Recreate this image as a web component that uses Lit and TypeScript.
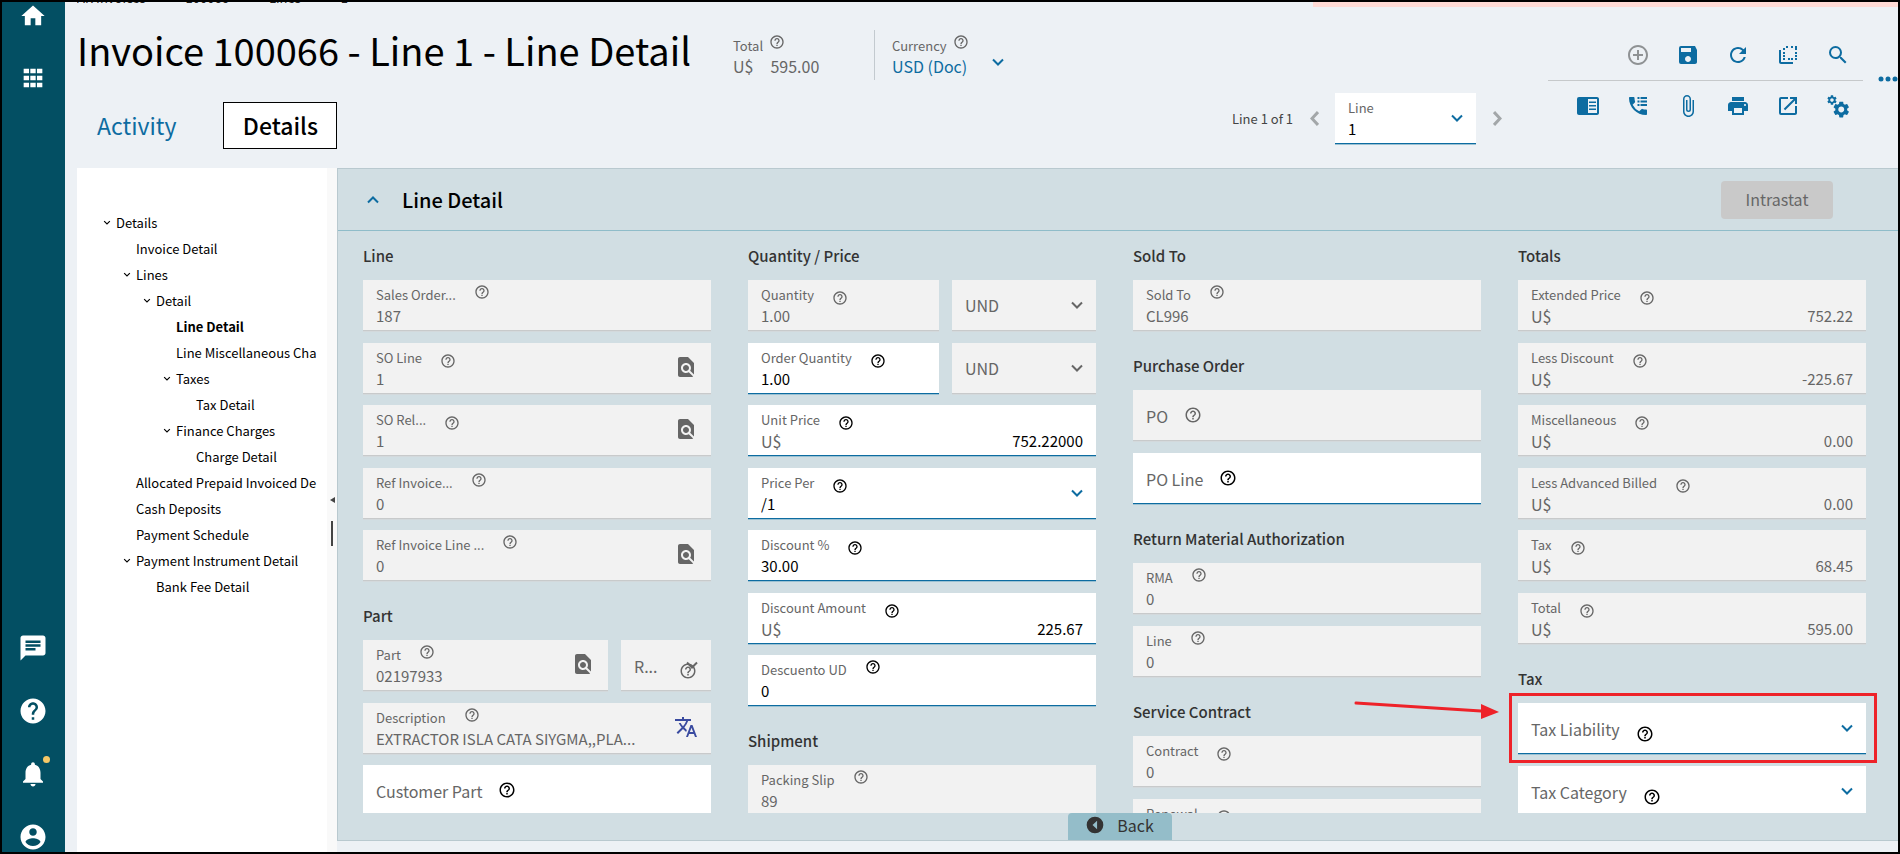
import { LitElement, html, svg, css, nothing, type TemplateResult } from "lit";
import { customElement, property } from "lit/decorators.js";
import { classMap } from "lit/directives/class-map.js";

type Kind = "text" | "select" | "money";

interface FieldSpec {
  label?: string;
  name?: string;
  value?: string;
  kind?: Kind;
  editable?: boolean;
  empty?: boolean;
  help?: "high" | "low" | "over" | "none";
  action?: "find" | "translate";
  marked?: boolean;
}

interface Row {
  layout?: "qty" | "part";
  fields: FieldSpec[];
}

interface Section {
  title: string;
  rows: Row[];
}

interface TreeItem {
  text: string;
  level: number;
  open?: boolean;
  current?: boolean;
}

const icon = (name: string, cls = "", box = "0 0 24 24") => html`
  <svg class="icon ${cls}" viewBox=${box} aria-hidden="true">${ICONS[name]}</svg>
`;

const GEAR =
  "M19.140 12.940c.04-.3.06-.61.06-.94 0-.32-.02-.64-.07-.94l2.030-1.580c.18-.14.23-.41.12-.61l-1.920-3.320c-.12-.22-.37-.29-.59-.22l-2.390.96c-.5-.38-1.030-.7-1.620-.94l-.36-2.540c-.04-.24-.24-.41-.48-.41h-3.840c-.24 0-.43.17-.47.41l-.36 2.540c-.59.24-1.130.57-1.620.94l-2.390-.96c-.22-.08-.47 0-.59.22L2.740 8.870c-.12.21-.08.47.12.61l2.030 1.580c-.05.3-.09.63-.09.94s.02.64.07.94l-2.030 1.580c-.18.14-.23.41-.12.61l1.920 3.320c.12.22.37.29.59.22l2.390-.96c.5.38 1.030.7 1.620.94l.36 2.540c.05.24.24.41.48.41h3.840c.24 0 .44-.17.47-.41l.36-2.540c.59-.24 1.130-.56 1.620-.94l2.390.96c.22.08.47 0 .59-.22l1.920-3.320c.12-.22.07-.47-.12-.61zM12 15.600c-1.980 0-3.600-1.620-3.600-3.600s1.620-3.600 3.600-3.600 3.600 1.620 3.600 3.600-1.620 3.600-3.600 3.600z";

const ICONS: Record<string, TemplateResult> = {
  home: svg`<path d="M10 20v-6h4v6h5v-8h3L12 3 2 12h3v8z"/>`,
  apps: svg`<path d="M4 8h4.6V4H4zm5.7 6h4.6v-4H9.700zM4 20h4.600v-4H4zm0-6h4.600v-4H4zm5.700 6h4.600v-4H9.700zM15.400 4v4H20V4zM9.700 8h4.600V4H9.700zM15.400 14H20v-4h-4.600zM15.400 20H20v-4h-4.600z"/>`,
  chat: svg`<path d="M20 2H4c-1.100 0-2 .9-2 2v18l4-4h14c1.100 0 2-.9 2-2V4c0-1.100-.9-2-2-2zM6 9h12v2H6zm8 5H6v-2h8zm4-6H6V6h12z"/>`,
  helpFull: svg`<path d="M12 2C6.480 2 2 6.480 2 12s4.480 10 10 10 10-4.480 10-10S17.520 2 12 2zm1 17h-2v-2h2zm2.070-7.750l-.9.920C13.450 12.900 13 13.500 13 15h-2v-.5c0-1.100.45-2.100 1.170-2.830l1.240-1.260c.37-.36.59-.86.59-1.410 0-1.100-.9-2-2-2s-2 .9-2 2H8c0-2.210 1.790-4 4-4s4 1.790 4 4c0 .88-.36 1.680-.93 2.250z"/>`,
  bell: svg`<path d="M12 22c1.100 0 2-.9 2-2h-4c0 1.100.89 2 2 2zm6-6v-5c0-3.070-1.640-5.640-4.500-6.320V4c0-.83-.67-1.500-1.500-1.500s-1.500.67-1.500 1.500v.68C7.630 5.360 6 7.920 6 11v5l-2 2v1h16v-1z"/>`,
  user: svg`<path d="M12 2C6.480 2 2 6.480 2 12s4.480 10 10 10 10-4.480 10-10S17.520 2 12 2zm0 3c1.660 0 3 1.340 3 3s-1.340 3-3 3-3-1.340-3-3 1.340-3 3-3zm0 14.200c-2.500 0-4.710-1.280-6-3.220.03-1.990 4-3.080 6-3.080 1.990 0 5.970 1.090 6 3.080-1.290 1.940-3.500 3.220-6 3.220z"/>`,
  help: svg`<path d="M11 18h2v-2h-2zm1-16C6.480 2 2 6.480 2 12s4.480 10 10 10 10-4.480 10-10S17.520 2 12 2zm0 18c-4.410 0-8-3.590-8-8s3.590-8 8-8 8 3.590 8 8-3.590 8-8 8zm0-14c-2.210 0-4 1.790-4 4h2c0-1.100.9-2 2-2s2 .9 2 2c0 2-3 1.750-3 5h2c0-2.250 3-2.500 3-5 0-2.210-1.790-4-4-4z"/>`,
  chevron: svg`<path class="line" d="M2 1.500 7 6.500 12 1.500"/>`,
  add: svg`<path d="M13 7h-2v4H7v2h4v4h2v-4h4v-2h-4zm-1-5C6.480 2 2 6.480 2 12s4.480 10 10 10 10-4.480 10-10S17.520 2 12 2zm0 18c-4.410 0-8-3.590-8-8s3.590-8 8-8 8 3.590 8 8-3.590 8-8 8z"/>`,
  save: svg`<path d="M19 3H5a2 2 0 0 0-2 2v14a2 2 0 0 0 2 2h14c1.100 0 2-.9 2-2V7l-2-4zm-7 16c-1.660 0-3-1.340-3-3s1.340-3 3-3 3 1.340 3 3-1.340 3-3 3zm3-10H5V5h10z"/>`,
  refresh: svg`<path d="M17.650 6.350A7.958 7.958 0 0 0 12 4c-4.420 0-7.990 3.580-7.990 8s3.570 8 7.990 8c3.730 0 6.840-2.550 7.730-6h-2.080A5.990 5.990 0 0 1 12 18c-3.310 0-6-2.690-6-6s2.690-6 6-6c1.660 0 3.140.69 4.220 1.780L13 11h7V4z"/>`,
  copy: svg`<path d="M7 7h2V5H7zm0 4h2V9H7zm0-8v0h2V3zm5 14h2v-2h-2zm7-14h0v2h2V3zm-7 0h-2v2h2zm7 14h2v-2h-2zM7 17h2v-2H7zm12-6h2V9h-2zm0-4h2V5h-2zm0 7h2v-2h-2zM7 14h2v-2H7zm8-9h2V3h-2zm0 12h2v-2h-2zM5 7H3v12c0 1.100.9 2 2 2h12v-2H5z"/>`,
  search: svg`<path d="M15.500 14h-.79l-.28-.27A6.471 6.471 0 0 0 16 9.500 6.500 6.500 0 1 0 9.500 16c1.610 0 3.090-.59 4.230-1.570l.27.28v.79l5 4.990L20.490 19zm-6 0C7.010 14 5 11.990 5 9.500S7.010 5 9.500 5 14 7.010 14 9.500 11.990 14 9.500 14z"/>`,
  reader: svg`<path d="M21 3H3a2 2 0 0 0-2 2v14c0 1.100.9 2 2 2h18c1.100 0 2-.9 2-2V5c0-1.100-.9-2-2-2zm0 16h-9V5h9zM13 7.500h7V9h-7zm0 3.500h7v1.500h-7zm0 3.500h7V16h-7z"/>`,
  phone: svg`<path d="M20 15.500c-1.250 0-2.450-.2-3.570-.57a1.020 1.020 0 0 0-1.020.24l-2.200 2.200a15.045 15.045 0 0 1-6.590-6.580l2.200-2.210c.28-.27.36-.66.250-1.010A11.360 11.360 0 0 1 8.500 4c0-.55-.45-1-1-1H4c-.55 0-1 .45-1 1 0 9.390 7.610 17 17 17 .55 0 1-.45 1-1v-3.500c0-.55-.45-1-1-1zM11.500 3h2v2h-2zm3 0H21v2h-6.500zm-3 3.500h2v2h-2zm3 0H21v2h-6.500zm-3 3.500h2v2h-2zm3 0H21v2h-6.500z"/>`,
  clip: svg`<path d="M16.500 6v11.500c0 2.210-1.790 4-4 4s-4-1.790-4-4V5a2.500 2.500 0 0 1 5 0v10.500c0 .55-.45 1-1 1s-1-.45-1-1V6H10v9.500a2.500 2.500 0 0 0 5 0V5c0-2.210-1.790-4-4-4S7 2.790 7 5v12.500c0 3.040 2.460 5.500 5.500 5.500s5.500-2.460 5.500-5.500V6z"/>`,
  print: svg`<path d="M19 8H5c-1.660 0-3 1.340-3 3v6h4v4h12v-4h4v-6c0-1.660-1.340-3-3-3zm-3 11H8v-5h8zm3-7c-.55 0-1-.45-1-1s.45-1 1-1 1 .45 1 1-.45 1-1 1zM18 3H6v4h12z"/>`,
  open: svg`<path d="M19 19H5V5h7V3H5a2 2 0 0 0-2 2v14a2 2 0 0 0 2 2h14c1.100 0 2-.9 2-2v-7h-2zM14 3v2h3.590l-9.830 9.830 1.410 1.410L19 6.410V10h2V3z"/>`,
  gears: svg`<path transform="translate(5.400 5.700) scale(.82)" d=${GEAR}/><path transform="translate(.1 .1) scale(.49)" d=${GEAR}/>`,
  dots: svg`<circle cx="4" cy="12" r="2.500"/><circle cx="11" cy="12" r="2.500"/><circle cx="18" cy="12" r="2.500"/>`,
  find: svg`<path d="M20 19.590V8l-6-6H6c-1.100 0-1.990.9-1.990 2L4 20c0 1.100.89 2 1.990 2H18c.45 0 .85-.15 1.190-.4l-4.430-4.430c-.8.520-1.740.83-2.760.83-2.760 0-5-2.240-5-5s2.240-5 5-5 5 2.240 5 5c0 1.020-.31 1.960-.83 2.750zM9 13c0 1.660 1.340 3 3 3s3-1.340 3-3-1.340-3-3-3-3 1.340-3 3z"/>`,
  translate: svg`<path d="M12.870 15.070l-2.540-2.510.03-.03A17.520 17.520 0 0 0 14.070 6H17V4h-7V2H8v2H1v1.990h11.170C11.500 7.920 10.440 9.750 9 11.350 8.070 10.320 7.300 9.190 6.690 8h-2c.73 1.630 1.730 3.170 2.980 4.560l-5.090 5.020L4 19l5-5 3.110 3.110zM18.500 10h-2L12 22h2l1.120-3h4.750L21 22h2zm-2.620 7l1.620-4.330L19.120 17z"/>`,
  back: svg`<path fill-rule="evenodd" d="M12 2a10 10 0 1 0 0 20 10 10 0 0 0 0-20zM14.500 7v10L9 12z"/>`,
};

const sharedStyles = css`
  *,
  *::before,
  *::after {
    box-sizing: border-box;
  }
  button,
  input,
  select {
    font: inherit;
    color: inherit;
    margin: 0;
    padding: 0;
    border: 0;
    border-radius: 0;
    background: none;
    appearance: none;
    outline: none;
    min-width: 0;
    opacity: 1;
  }
  button {
    display: flex;
    align-items: center;
    justify-content: center;
    flex: none;
  }
  .icon {
    display: block;
    flex: none;
    width: 24px;
    height: 24px;
    fill: currentColor;
  }
  .icon.help {
    width: 16px;
    height: 16px;
  }
  .icon.help.big {
    width: 18px;
    height: 18px;
  }
  .icon.chev {
    width: 14px;
    height: 8px;
  }
  .line {
    fill: none;
    stroke: currentColor;
    stroke-width: 2;
  }
`;

@customElement("form-field")
export class FormField extends LitElement {
  @property({ attribute: false }) spec: FieldSpec = {};

  static styles = [
    sharedStyles,
    css`
      :host {
        display: block;
        min-width: 0;
        position: relative;
      }
      .field {
        display: flex;
        align-items: center;
        height: 51px;
        padding: 0 13px;
        background: #f2f2f2;
        color: #666;
        border-bottom: 1px solid #c8cacb;
        box-shadow: 0 1px #d3d9dc;
        font-size: 15px;
        line-height: 20px;
      }
      .field.editable {
        background: #fff;
        border-bottom-color: #0d6ca1;
        box-shadow: 0 1px #9bc1d2;
      }
      .body {
        flex: 1;
        min-width: 0;
      }
      .top {
        display: flex;
        gap: 18px;
        height: 22px;
        align-items: center;
      }
      .label {
        font-size: 13px;
        line-height: 22px;
        white-space: nowrap;
        color: #666;
      }
      .high {
        align-self: flex-start;
      }
      .low {
        align-self: flex-end;
      }
      .editable .help {
        color: #000;
      }
      .value {
        display: flex;
        height: 20px;
      }
      .unit {
        font-size: 16px;
        color: #666;
      }
      .input {
        flex: 1;
        width: 100%;
        height: 20px;
        line-height: 20px;
      }
      .editable .input {
        color: #000;
      }
      .input.right {
        text-align: right;
      }
      .large,
      .large .label {
        font-size: 16px;
      }
      .large .label {
        padding-top: 2px;
      }
      .large .help {
        margin-left: 16px;
      }
      .large .low {
        align-self: center;
        box-sizing: content-box;
        padding-top: 12px;
      }
      .large .input {
        height: 24px;
        line-height: 24px;
      }
      .chev {
        pointer-events: none;
        margin-right: -1px;
      }
      .editable .chev {
        color: #0d6ca1;
      }
      .translate {
        color: #3a4ba0;
      }
      .find,
      .translate {
        padding-bottom: 2px;
      }
      .stack {
        position: relative;
        margin-left: auto;
      }
      .stack .help {
        position: absolute;
        left: -6px;
        top: 1px;
        margin: 0;
      }
    `,
  ];

  render() {
    const f = this.spec;
    const kind = f.kind ?? "text";
    const name = f.label ?? f.name ?? "";
    const large = f.empty || !f.label;
    const control =
      kind === "select"
        ? html`<select id="control" class="input" aria-label=${f.label ? nothing : name} ?disabled=${!f.editable}>
            <option>${f.value ?? ""}</option>
          </select>`
        : html`<input
            id="control"
            class="input ${kind === "money" ? "right" : ""}"
            .value=${f.value ?? ""}
            ?readonly=${!f.editable}
          />`;
    const chevron = kind === "select" ? icon("chevron", "chev", "0 0 14 8") : nothing;
    const label = f.label ? html`<label class="label" for="control">${f.label}</label>` : nothing;
    const classes = { field: true, editable: !!f.editable, large: !!large };

    if (f.help === "over") {
      return html`<div class=${classMap(classes)}>
        ${label}${control}
        <span class="stack">${chevron}${icon("help", "help big")}</span>
      </div>`;
    }
    if (large) {
      return html`<div class=${classMap(classes)}>
        ${label}${f.label ? icon("help", `help big ${f.help ?? ""}`) : nothing}${control}${chevron}
      </div>`;
    }
    return html`<div class=${classMap(classes)}>
      <div class="body">
        <div class="top">${label}${f.help === "none" ? nothing : icon("help", `help ${f.help ?? "high"}`)}</div>
        <div class="value">${kind === "money" ? html`<span class="unit">U$</span>` : nothing}${control}</div>
      </div>
      ${chevron}
      ${f.action
        ? html`<button class=${f.action} aria-label=${f.action === "find" ? "Search" : "Translate"}>
            ${icon(f.action)}
          </button>`
        : nothing}
    </div>`;
  }
}

const ro = (label: string, value: string, help: "high" | "low" = "high", extra: Partial<FieldSpec> = {}): Row => ({
  fields: [{ label, value, help, ...extra }],
});
const ed = (label: string, value: string, help: "high" | "low" = "low", extra: Partial<FieldSpec> = {}): Row => ({
  fields: [{ label, value, help, editable: true, ...extra }],
});
const money = (label: string, value: string, editable = false): Row => ({
  fields: [{ label, value, help: "low", kind: "money", editable }],
});

const LINE_PICKER: FieldSpec = { label: "Line", value: "1", kind: "select", editable: true, help: "none" };

const COLUMNS: Section[][] = [
  [
    {
      title: "Line",
      rows: [
        ro("Sales Order...", "187"),
        ro("SO Line", "1", "low", { action: "find" }),
        ro("SO Rel...", "1", "low", { action: "find" }),
        ro("Ref Invoice...", "0"),
        ro("Ref Invoice Line ...", "0", "high", { action: "find" }),
      ],
    },
    {
      title: "Part",
      rows: [
        {
          layout: "part",
          fields: [
            { label: "Part", value: "02197933", help: "high", action: "find" },
            { label: "R...", kind: "select", empty: true, help: "over" },
          ],
        },
        ro("Description", "EXTRACTOR ISLA CATA SIYGMA,,PLA...", "high", { action: "translate" }),
        { fields: [{ label: "Customer Part", empty: true, editable: true }] },
      ],
    },
  ],
  [
    {
      title: "Quantity / Price",
      rows: [
        {
          layout: "qty",
          fields: [
            { label: "Quantity", value: "1.00", help: "low" },
            { name: "Quantity unit", value: "UND", kind: "select" },
          ],
        },
        {
          layout: "qty",
          fields: [
            { label: "Order Quantity", value: "1.00", help: "low", editable: true },
            { name: "Order quantity unit", value: "UND", kind: "select" },
          ],
        },
        money("Unit Price", "752.22000", true),
        ed("Price Per", "/1", "low", { kind: "select" }),
        ed("Discount %", "30.00"),
        money("Discount Amount", "225.67", true),
        ed("Descuento UD", "0", "high"),
      ],
    },
    { title: "Shipment", rows: [ro("Packing Slip", "89")] },
  ],
  [
    { title: "Sold To", rows: [ro("Sold To", "CL996")] },
    {
      title: "Purchase Order",
      rows: [
        { fields: [{ label: "PO", empty: true }] },
        { fields: [{ label: "PO Line", empty: true, editable: true }] },
      ],
    },
    { title: "Return Material Authorization", rows: [ro("RMA", "0"), ro("Line", "0")] },
    { title: "Service Contract", rows: [ro("Contract", "0", "low"), ro("Renewal", "0", "low")] },
  ],
  [
    {
      title: "Totals",
      rows: [
        money("Extended Price", "752.22"),
        money("Less Discount", "-225.67"),
        money("Miscellaneous", "0.00"),
        money("Less Advanced Billed", "0.00"),
        money("Tax", "68.45"),
        money("Total", "595.00"),
      ],
    },
    {
      title: "Tax",
      rows: [
        { fields: [{ label: "Tax Liability", empty: true, editable: true, kind: "select", help: "low", marked: true }] },
        { fields: [{ label: "Tax Category", empty: true, editable: true, kind: "select", help: "low" }] },
      ],
    },
  ],
];

const TREE: TreeItem[] = [
  { text: "Details", level: 0, open: true },
  { text: "Invoice Detail", level: 1 },
  { text: "Lines", level: 1, open: true },
  { text: "Detail", level: 2, open: true },
  { text: "Line Detail", level: 3, current: true },
  { text: "Line Miscellaneous Cha", level: 3 },
  { text: "Taxes", level: 3, open: true },
  { text: "Tax Detail", level: 4 },
  { text: "Finance Charges", level: 3, open: true },
  { text: "Charge Detail", level: 4 },
  { text: "Allocated Prepaid Invoiced De", level: 1 },
  { text: "Cash Deposits", level: 1 },
  { text: "Payment Schedule", level: 1 },
  { text: "Payment Instrument Detail", level: 1, open: true },
  { text: "Bank Fee Detail", level: 2 },
];

const TOOLS_TOP = [
  ["add", "New"],
  ["save", "Save"],
  ["refresh", "Refresh"],
  ["copy", "Copy"],
  ["search", "Search"],
];
const TOOLS_BOTTOM = [
  ["reader", "Reader view"],
  ["phone", "Call log"],
  ["clip", "Attachments"],
  ["print", "Print"],
  ["open", "Open in new window"],
  ["gears", "Settings"],
];

@customElement("app-root")
export class AppRoot extends LitElement {
  static styles = [
    sharedStyles,
    css`
      :host {
        display: block;
        font-family: "Noto Sans CJK JP", "Noto Sans", sans-serif;
        color: #000;
      }
      .frame {
        display: flex;
        height: 100vh;
        border: 2px solid #000;
        background: #edf1f5;
        overflow: hidden;
      }
      .rail {
        flex: none;
        width: 63px;
        padding-right: 1px;
        background: #034f63;
        color: #fff;
        display: flex;
        flex-direction: column;
        justify-content: space-between;
      }
      .rail-group {
        display: flex;
        flex-direction: column;
        align-items: center;
      }
      .rail-group.upper {
        gap: 34px;
      }
      .rail-group.lower {
        gap: 33px;
      }
      .rail .icon {
        width: 30px;
        height: 30px;
      }
      .rail .icon.grid,
      .rail .icon.house {
        width: 28px;
        height: 28px;
      }
      .alert {
        position: relative;
      }
      .alert::after {
        content: "";
        position: absolute;
        right: -2px;
        top: -3px;
        width: 7px;
        height: 7px;
        border-radius: 50%;
        background: #f6c867;
      }
      .main {
        flex: 1;
        min-width: 0;
        display: flex;
        flex-direction: column;
        padding-left: 12px;
      }
      .crumbs {
        flex: none;
        display: flex;
        align-items: flex-end;
        justify-content: space-between;
        height: 5px;
        overflow: hidden;
      }
      .trail {
        display: flex;
        gap: 40px;
        font-size: 13px;
        line-height: 18px;
      }
      .trail a {
        color: #222;
        text-decoration: none;
      }
      .notice {
        width: 585px;
        height: 5px;
        background: #ffdad5;
      }
      .head {
        flex: none;
        display: flex;
        justify-content: space-between;
        height: 161px;
      }
      .title-row {
        display: flex;
        align-items: flex-start;
        padding-top: 23px;
        white-space: nowrap;
      }
      .title {
        margin: 0;
        font-size: 38px;
        line-height: 40px;
        font-weight: 400;
      }
      .stat {
        margin-left: 42px;
        color: #666;
        font-size: 16px;
      }
      .stat-top {
        display: flex;
        gap: 6px;
        height: 24px;
        padding-top: 4px;
      }
      .stat-top .label {
        font-size: 13px;
        line-height: 24px;
      }
      .stat-value {
        display: flex;
        gap: 17px;
        line-height: 24px;
        height: 24px;
        width: 141px;
      }
      .currency {
        margin-left: 0;
        padding-left: 17px;
        border-left: 1px solid #c3cacf;
        height: 50px;
      }
      .currency .stat-value {
        color: #0d6ca1;
        gap: 0;
      }
      .currency .input {
        width: 99px;
        height: 24px;
        line-height: 24px;
      }
      .currency .chev {
        margin-top: 4px;
      }
      .tabs {
        display: flex;
        align-items: center;
        padding: 22px 0 0 20px;
        gap: 47px;
      }
      .tab {
        height: 47px;
        font-size: 23px;
        color: #0d6ca1;
        padding-bottom: 2px;
      }
      .tab.selected {
        width: 114px;
        background: #fff;
        border: 1px solid #000;
        color: #000;
        font-weight: 500;
      }
      .side {
        display: flex;
        position: relative;
      }
      .pager {
        display: flex;
        align-items: center;
        height: 51px;
        margin-top: 86px;
        font-size: 13px;
        color: #444;
      }
      .pager .arrow {
        width: 42px;
        height: 40px;
        color: #a3a7a9;
      }
      .arrow .icon {
        width: 9px;
        height: 15px;
      }
      .arrow .line {
        stroke-width: 3;
      }
      .picker {
        width: 141px;
      }
      .tools {
        width: 315px;
        margin: 0 35px 0 30px;
        color: #0d6ca1;
      }
      .tool-row {
        display: flex;
        justify-content: flex-end;
        gap: 26px;
        padding-right: 13px;
      }
      .tool-row.upper {
        padding-top: 36px;
        padding-bottom: 13px;
        border-bottom: 1px solid #c6c9cb;
      }
      .tool-row.lower {
        padding-top: 13px;
      }
      .tool-row button:disabled {
        color: #8f9294;
      }
      .more {
        position: absolute;
        right: -3px;
        top: 60px;
        color: #0d6ca1;
      }
      .content {
        flex: 1;
        min-height: 0;
        display: flex;
      }
      .tree {
        flex: none;
        width: 250px;
        padding: 41px 5px 0 20px;
        background: #fff;
      }
      .tree-list {
        list-style: none;
        margin: 0;
        padding: 0;
        overflow: hidden;
      }
      .node {
        display: flex;
        align-items: center;
        height: 26px;
        font-size: 13px;
        white-space: nowrap;
      }
      .node.l1 {
        padding-left: 20px;
      }
      .node.l2 {
        padding-left: 40px;
      }
      .node.l3 {
        padding-left: 60px;
      }
      .node.l4 {
        padding-left: 80px;
      }
      .node a {
        color: inherit;
        text-decoration: none;
      }
      .node.current {
        font-weight: 700;
      }
      .twist {
        display: flex;
        width: 19px;
        justify-content: center;
        flex: none;
      }
      .twist .icon {
        width: 8px;
        height: 5px;
      }
      .splitter {
        flex: none;
        width: 10px;
        background: #f9f9f9;
        display: flex;
        flex-direction: column;
        align-items: center;
        gap: 18px;
        padding: 329px 0 0 0;
      }
      .fold {
        border: 3px solid transparent;
        border-right: 5px solid #444;
        border-left-width: 0;
      }
      .grip {
        width: 2px;
        height: 25px;
        background: #444;
      }
      .panel {
        flex: 1;
        min-width: 0;
        margin-bottom: 11px;
        background: #d1dee3;
        border: 1px solid #b9c9cf;
        border-right: 0;
        display: flex;
        flex-direction: column;
      }
      .panel-head {
        flex: none;
        display: flex;
        align-items: center;
        height: 62px;
        padding: 0 65px 0 28px;
        border-bottom: 1px solid #8fbcc9;
      }
      .collapse .icon {
        color: #0d6ca1;
        transform: rotate(180deg);
      }
      .panel-title {
        flex: 1;
        margin: 0 0 0 22px;
        font-size: 20px;
        font-weight: 500;
        line-height: 30px;
      }
      .intrastat {
        width: 112px;
        height: 38px;
        padding-bottom: 2px;
        border-radius: 4px;
        background: #c9c9c9;
        color: #666;
        font-size: 16px;
      }
      .sheet {
        flex: 1;
        min-height: 0;
        overflow: hidden;
        display: grid;
        grid-template-columns: repeat(4, minmax(0, 1fr));
        gap: 37px;
        padding: 13px 32px 0 25px;
        align-items: start;
      }
      .section {
        margin-bottom: 23px;
      }
      .section-title {
        margin: 0 0 12px;
        font-size: 15px;
        line-height: 24px;
        font-weight: 500;
        color: #333;
      }
      .rows {
        display: flex;
        flex-direction: column;
      }
      .row {
        display: grid;
        grid-template-columns: minmax(0, 1fr);
        gap: 13px;
        margin-bottom: 12px;
        position: relative;
      }
      .row:nth-child(even) {
        margin-bottom: 11px;
      }
      .row:last-child {
        margin-bottom: 0;
      }
      .row.qty {
        grid-template-columns: minmax(0, 191fr) minmax(0, 144fr);
      }
      .row.part {
        grid-template-columns: minmax(0, 1fr) 90px;
      }
      .mark {
        position: absolute;
        inset: -10px -11px -9px -9px;
        border: 3px solid #ee2229;
        pointer-events: none;
      }
      .pointer {
        position: absolute;
        right: 100%;
        top: -4px;
        margin-right: 19px;
        width: 146px;
        height: 22px;
      }
      .foot {
        flex: none;
        display: flex;
        justify-content: center;
        height: 27px;
        padding-left: 3px;
      }
      .back {
        width: 104px;
        gap: 12px;
        padding-bottom: 4px;
        border-radius: 4px 4px 0 0;
        background: #94bdc9;
        color: #333;
        font-size: 16px;
      }
      .back .icon {
        width: 20px;
        height: 20px;
      }
    `,
  ];

  private renderSection(section: Section) {
    return html`<section class="section">
      <h3 class="section-title">${section.title}</h3>
      <div class="rows">
        ${section.rows.map(
          (row) => html`<div class="row ${row.layout ?? ""}">
            ${row.fields.map((spec) => html`<form-field .spec=${spec}></form-field>`)}
            ${row.fields.some((spec) => spec.marked)
              ? html`<div class="mark"></div>
                  <svg class="pointer" viewBox="0 0 146 22" aria-hidden="true">
                    <path d="M3 4 128 12" stroke="#ee2229" stroke-width="3" stroke-linecap="round" />
                    <path d="M128 5 146 13 128 20z" fill="#ee2229" />
                  </svg>`
              : nothing}
          </div>`,
        )}
      </div>
    </section>`;
  }

  private renderTool([name, label]: string[]) {
    return html`<button aria-label=${label} ?disabled=${name === "add"}>${icon(name)}</button>`;
  }

  render() {
    return html`<div class="frame">
      <nav class="rail" aria-label="Main">
        <div class="rail-group upper">
          <button aria-label="Home">${icon("home", "house")}</button>
          <button aria-label="Apps">${icon("apps", "grid")}</button>
        </div>
        <div class="rail-group lower">
          <button aria-label="Messages">${icon("chat")}</button>
          <button aria-label="Help">${icon("helpFull")}</button>
          <button class="alert" aria-label="Notifications">${icon("bell")}</button>
          <button aria-label="Account">${icon("user")}</button>
        </div>
      </nav>
      <main class="main">
        <div class="crumbs">
          <div class="trail"><a href="#">AR Invoices</a><a href="#">100066</a><a href="#">Lines</a><a href="#">1</a></div>
          <div class="notice"></div>
        </div>
        <header class="head">
          <div>
            <div class="title-row">
              <h1 class="title">Invoice 100066 - Line 1 - Line Detail</h1>
              <div class="stat">
                <div class="stat-top"><span class="label">Total</span>${icon("help", "help")}</div>
                <div class="stat-value"><span>U$</span><span>595.00</span></div>
              </div>
              <div class="stat currency">
                <div class="stat-top">
                  <label class="label" for="currency">Currency</label>${icon("help", "help")}
                </div>
                <div class="stat-value">
                  <select id="currency" class="input"><option>USD (Doc)</option></select>
                  ${icon("chevron", "chev", "0 0 14 8")}
                </div>
              </div>
            </div>
            <div class="tabs">
              <button class="tab">Activity</button>
              <button class="tab selected">Details</button>
            </div>
          </div>
          <div class="side">
            <div class="pager">
              <span>Line 1 of 1</span>
              <button class="arrow" aria-label="Previous line">
                <svg class="icon" viewBox="0 0 9 15"><path class="line" d="M8 1 2 7.500 8 14" /></svg>
              </button>
              <form-field class="picker" .spec=${LINE_PICKER}></form-field>
              <button class="arrow" aria-label="Next line">
                <svg class="icon" viewBox="0 0 9 15"><path class="line" d="M1 1 7 7.500 1 14" /></svg>
              </button>
            </div>
            <div class="tools">
              <div class="tool-row upper">${TOOLS_TOP.map((t) => this.renderTool(t))}</div>
              <div class="tool-row lower">${TOOLS_BOTTOM.map((t) => this.renderTool(t))}</div>
            </div>
            <button class="more" aria-label="More">${icon("dots")}</button>
          </div>
        </header>
        <div class="content">
          <nav class="tree" aria-label="Sections">
            <ul class="tree-list">
              ${TREE.map(
                (n) => html`<li class="node l${n.level} ${n.current ? "current" : ""}">
                  <span class="twist">${n.open ? icon("chevron", "", "0 0 14 8") : nothing}</span>
                  <a href="#">${n.text}</a>
                </li>`,
              )}
            </ul>
          </nav>
          <div class="splitter"><div class="fold"></div><div class="grip"></div></div>
          <section class="panel">
            <div class="panel-head">
              <button class="collapse" aria-label="Collapse">${icon("chevron", "chev", "0 0 14 8")}</button>
              <h2 class="panel-title">Line Detail</h2>
              <button class="intrastat" disabled>Intrastat</button>
            </div>
            <div class="sheet">
              ${COLUMNS.map((col) => html`<div>${col.map((s) => this.renderSection(s))}</div>`)}
            </div>
            <div class="foot"><button class="back">${icon("back")}<span>Back</span></button></div>
          </section>
        </div>
      </main>
    </div>`;
  }
}
